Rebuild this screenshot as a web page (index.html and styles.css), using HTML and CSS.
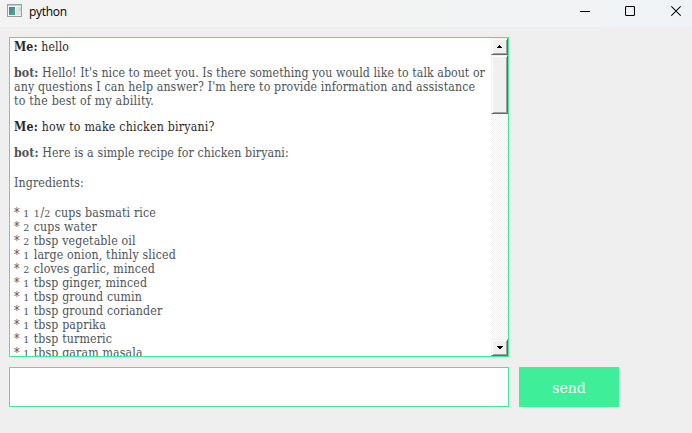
FILE: index.html
```html
<!DOCTYPE html>
<html lang="en">
<head>
<meta charset="utf-8">
<title>python</title>
<link rel="stylesheet" href="styles.css">
</head>
<body>
<header class="titlebar">
  <svg class="app-icon" width="16" height="14" viewBox="0 0 16 14">
    <defs><linearGradient id="pane" x1="0" y1="0" x2="1" y2="1"><stop offset="0" stop-color="#4778a5"/><stop offset="1" stop-color="#58ad7b"/></linearGradient></defs>
    <rect x=".5" y=".5" width="14" height="12" fill="#f5f5f5" stroke="#9a9fa3"/>
    <path d="M1 1.5h13" stroke="#c5cbd0"/>
    <rect x="2" y="3" width="6" height="8" fill="url(#pane)"/>
    <rect x="9" y="3" width="3" height="8" fill="#dfe3e5"/>
    <rect x="12" y="3" width="2" height="4" fill="#c3dccf"/>
    <rect x="12" y="7" width="2" height="4" fill="#e3e7e8"/>
  </svg>
  <span class="title">python</span>
  <div class="controls">
    <svg width="10" height="12" viewBox="0 0 10 12"><path d="M0 6.5h10" stroke="#000"/></svg>
    <svg width="10" height="12" viewBox="0 0 10 12"><rect x=".5" y="1.5" width="9" height="9" rx="1" fill="none" stroke="#000" stroke-width="1.1"/></svg>
    <svg class="close" width="10" height="12" viewBox="0 0 10 12"><path d="M.3 1.3l9.4 9.4M9.7 1.3L.3 10.7" stroke="#000" stroke-width="1.1"/></svg>
  </div>
</header>
<main>
  <section class="chat">
    <div class="messages">
      <p class="me"><span><b>Me:</b> hello</span></p>
      <p><span class="tight"><b>bot:</b> Hello! It's nice to meet you. Is there something you would like to talk about or</span><br><span class="loose">any questions I can help answer? I'm here to provide information and assistance</span><br><span class="looser">to the best of my ability.</span></p>
      <p class="me"><span class="looser"><b>Me:</b> how to make chicken biryani?</span></p>
      <p><span><b>bot:</b> Here is a simple recipe for chicken biryani:</span></p>
      <p class="wide"><span class="loose">Ingredients:</span></p>
      <p class="wide list"><span>* <i>1</i> <i>1</i>/<i>2</i> cups basmati rice</span><br><span>* <i>2</i> cups water</span><br><span>* <i>2</i> tbsp vegetable oil</span><br><span>* <i>1</i> large onion, thinly sliced</span><br><span>* <i>2</i> cloves garlic, minced</span><br><span>* <i>1</i> tbsp ginger, minced</span><br><span>* <i>1</i> tbsp ground cumin</span><br><span>* <i>1</i> tbsp ground coriander</span><br><span>* <i>1</i> tbsp paprika</span><br><span>* <i>1</i> tbsp turmeric</span><br><span>* <i>1</i> tbsp garam masala</span></p>
    </div>
    <div class="scrollbar">
      <div class="bevel arrow"><svg width="5" height="3" viewBox="0 0 5 3" shape-rendering="crispEdges"><path d="M2 0h1v1h1v1h1v1H0V2h1V1h1z"/></svg></div>
      <div class="bevel thumb"></div>
      <div class="track"></div>
      <div class="bevel arrow"><svg width="6" height="3" viewBox="0 0 6 3" shape-rendering="crispEdges"><path d="M0 0h6v1H5v1H4v1H2V2H1V1H0z"/></svg></div>
    </div>
  </section>
  <form class="composer">
    <input type="text" aria-label="Message">
    <button type="button">send</button>
  </form>
</main>
</body>
</html>
```
FILE: styles.css
```css
* { box-sizing: border-box; }
body {
  margin: 0;
  height: 433px;
  overflow: hidden;
  background: #efefef;
  font-family: Georgia, "DejaVu Serif Condensed", "DejaVu Serif", serif;
}
.titlebar {
  height: 27px;
  display: flex;
  align-items: flex-start;
  padding: 4px 11px 0 7px;
  background: linear-gradient(90deg, #f3f3f3 55%, #f0f3f6);
}
.title {
  margin: 0 0 0 6px;
  font: 12px/16px "Open Sans", sans-serif;
  letter-spacing: -0.3px;
  color: #000;
}
.controls { display: flex; gap: 35px; margin: 1px 0 0 auto; }
.controls .close { margin-left: 1px; }
main { padding: 10px 9px; }
.chat {
  width: 500px;
  height: 320px;
  display: flex;
  border: 1px solid #41ea9a;
  background: #fff;
  overflow: hidden;
}
.messages {
  flex: 1;
  height: 318px;
  overflow: hidden;
  padding: 2px 0 0 4px;
  font-size: 12.25px;
  line-height: 14px;
  color: #4d5357;
  white-space: nowrap;
  letter-spacing: 0.1px;
}
.messages p { margin: 0 0 12px; }
.messages .me { color: #292929; }
.messages .wide { margin-top: 16px; }
.messages .list { letter-spacing: 0.15px; }
.messages .tight { letter-spacing: 0.06px; }
.messages .loose { letter-spacing: 0.13px; }
.messages .looser { letter-spacing: 0.22px; }
.messages i {
  font: 9.5px/0 "DejaVu Serif", serif;
  letter-spacing: 0.7px;
}
.scrollbar { width: 17px; display: flex; flex-direction: column; }
.bevel {
  background: #f0f0f0;
  border: 1px solid;
  border-color: #f0f0f0 #696969 #696969 #f0f0f0;
  box-shadow: inset 1px 1px #fff, inset -1px -1px #a0a0a0;
}
.arrow { height: 17px; display: flex; align-items: center; justify-content: center; }
.thumb { height: 59px; }
.track {
  flex: 1;
  background: repeating-conic-gradient(#f0f0f0 0 25%, #fff 0 50%) 0 0 / 2px 2px;
}
.composer { display: flex; gap: 10px; margin-top: 10px; }
.composer input {
  width: 500px;
  height: 40px;
  border: 1px solid #41ea9a;
  border-radius: 0;
  background: #fff;
  outline: 0;
}
.composer button {
  width: 100px;
  height: 40px;
  padding: 2px 0 0;
  border: 0;
  background: #3fee98;
  color: #fff;
  font: 15.5px/18px Georgia, "DejaVu Serif Condensed", "DejaVu Serif", serif;
}
```
